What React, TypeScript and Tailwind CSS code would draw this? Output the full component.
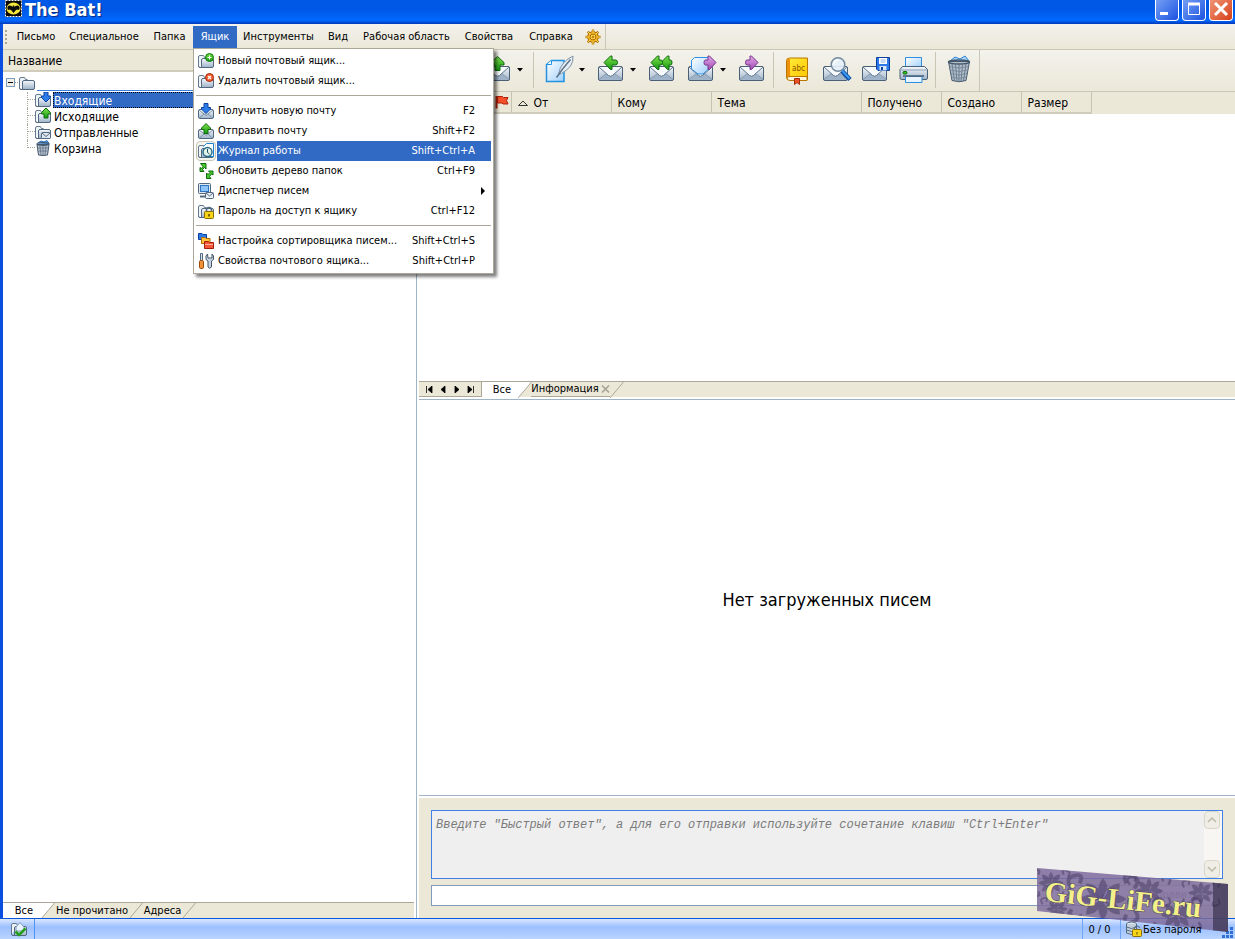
import { useState } from 'react'
import type { ReactNode } from 'react'

type Arrow = 'down' | 'up' | 'left' | 'left2' | 'right' | 'forward'

interface MenuEntry {
  label: string
  shortcut?: string
  icon: ReactNode
  submenu?: boolean
  separated?: boolean
}

/* ---------- shared gradients ---------- */

function Gradients() {
  return (
    <svg width="0" height="0" className="absolute" aria-hidden="true">
      <defs>
        <linearGradient id="steel" x1="0" y1="0" x2="0" y2="1">
          <stop offset="0" stopColor="#f6f9fc" />
          <stop offset="1" stopColor="#9db2c8" />
        </linearGradient>
        <linearGradient id="green" x1="0" y1="0" x2="0" y2="1">
          <stop offset="0" stopColor="#7be04a" />
          <stop offset="1" stopColor="#189a12" />
        </linearGradient>
        <linearGradient id="purple" x1="0" y1="0" x2="0" y2="1">
          <stop offset="0" stopColor="#e3a6ea" />
          <stop offset="1" stopColor="#a04fb4" />
        </linearGradient>
        <linearGradient id="paper" x1="0" y1="0" x2="1" y2="1">
          <stop offset="0" stopColor="#ffffff" />
          <stop offset="1" stopColor="#9fd0fb" />
        </linearGradient>
        <linearGradient id="gold" x1="0" y1="0" x2="1" y2="1">
          <stop offset="0" stopColor="#ffef3a" />
          <stop offset="1" stopColor="#ffc400" />
        </linearGradient>
      </defs>
    </svg>
  )
}

/* ---------- 16px icons ---------- */

function Icon16({ children }: { children: ReactNode }) {
  return (
    <svg width="16" height="16" viewBox="0 0 16 16" className="shrink-0" aria-hidden="true">
      {children}
    </svg>
  )
}

function FolderShape() {
  return (
    <>
      <path d="M.5 13V4q0-1.500 1.500-1.500h3.500l1 2h2" fill="#eef3f8" stroke="#64798e" />
      <path d="M3.500 14.500V7q0-1.500 1.500-1.500h9q1.500 0 1.500 1.500v6q0 1.500-1.500 1.500h-12q-1.500 0-1.500-1.500" fill="url(#steel)" stroke="#52687e" />
    </>
  )
}

function MailShape() {
  return (
    <>
      <rect x=".5" y="6.500" width="15" height="9" rx="1.500" fill="url(#steel)" stroke="#52687e" />
      <path d="M1 7l7 5.500L15 7M1.500 15l4.500-4M14.500 15L10 11" fill="none" stroke="#7d93a9" />
    </>
  )
}

const upPath = 'M8 .5l4.500 4.500v1.500h-2.500v4h-4v-4h-2.500v-1.500z'
const downPath = 'M6 .5h4v4h2.500v1.500L8 10.500 3.500 6v-1.500H6z'

const FolderIcon = () => <Icon16><FolderShape /></Icon16>
const InboxIcon = () => (
  <Icon16>
    <FolderShape />
    <path d={downPath} transform="translate(3 -.5)" fill="#2d7de8" stroke="#0b3fa0" />
  </Icon16>
)
const OutboxIcon = () => (
  <Icon16>
    <FolderShape />
    <path d={upPath} transform="translate(3 -.5)" fill="url(#green)" stroke="#0d6a10" />
  </Icon16>
)
const SentIcon = () => (
  <Icon16>
    <FolderShape />
    <rect x="6.500" y="8.500" width="9" height="6" rx="1" fill="#dfe8f1" stroke="#52687e" />
    <path d="M7 9l4 3.500L15 9" fill="none" stroke="#52687e" />
  </Icon16>
)
const TrashIcon = () => (
  <Icon16>
    <path d="M3 3l3-2 3 1 3-1.500 2 3z" fill="#5aa8f0" stroke="#2a6cb8" />
    <path d="M2 4.500l1.500 10.500q4.500 1 9 0L14 4.500z" fill="#b9c4d0" stroke="#45586b" />
    <path d="M5 6l1 9M8 6v9M11 6l-1 9M3 8h10M3.500 11h9" stroke="#5d7084" strokeWidth=".8" />
    <ellipse cx="8" cy="4" rx="6.500" ry="1.500" fill="none" stroke="#45586b" />
  </Icon16>
)
const FolderAddIcon = () => (
  <Icon16>
    <FolderShape />
    <circle cx="11.500" cy="4.500" r="4" fill="url(#green)" stroke="#0d7a10" />
    <path d="M9.500 4.500h4M11.500 2.500v4" stroke="#fff" />
  </Icon16>
)
const FolderRemoveIcon = () => (
  <Icon16>
    <FolderShape />
    <circle cx="11.500" cy="4.500" r="4" fill="#f2602f" stroke="#a82408" />
    <path d="M10 3l3 3M13 3l-3 3" stroke="#fff" strokeWidth="1.200" />
  </Icon16>
)
const ReceiveIcon = () => (
  <Icon16>
    <MailShape />
    <path d={downPath} fill="#2d7de8" stroke="#0b3fa0" />
  </Icon16>
)
const SendIcon = () => (
  <Icon16>
    <MailShape />
    <path d={upPath} fill="url(#green)" stroke="#0d6a10" />
  </Icon16>
)
const JournalIcon = () => (
  <Icon16>
    <FolderShape />
    <path d="M5.500 3.500l3-3h7v13h-7" fill="#fff" stroke="#1583d6" />
    <circle cx="9.500" cy="9" r="4.500" fill="#e4f3ea" stroke="#2b6c86" strokeWidth="1.500" />
    <path d="M9.500 6v3.500l2 1.500" fill="none" stroke="#1e4f62" />
  </Icon16>
)
const RefreshIcon = () => (
  <Icon16>
    <path d="M2.500.5h5.500v5.500L6.500 4.500l-2 2 1.500 2H2V4.500l1.500 1 1.500-2z" fill="#4cc832" stroke="#0d6a10" />
    <path d="M8.500 15.500V10l1.500 1.500 2-2L10.500 8H15v4l-1.500-1-2 2.500 1.500 2z" fill="#4cc832" stroke="#0d6a10" />
  </Icon16>
)
const DispatcherIcon = () => (
  <Icon16>
    <rect x=".5" y=".5" width="12" height="10" rx="1" fill="#dfe7ef" stroke="#52687e" />
    <rect x="2.500" y="2.500" width="8" height="6" fill="#8cc4fa" stroke="#2f74c0" />
    <path d="M2 13.500h5" stroke="#52687e" strokeWidth="2" />
    <rect x="7.500" y="9.500" width="8" height="6" rx="1" fill="#e9eff5" stroke="#52687e" />
    <path d="M8 10l3.500 3L15 10" fill="none" stroke="#52687e" />
  </Icon16>
)
const PasswordIcon = () => (
  <Icon16>
    <FolderShape />
    <path d="M8.500 9V7q0-2.500 2.500-2.500T13.500 7v2" fill="none" stroke="#52687e" strokeWidth="1.500" />
    <rect x="6.500" y="8.500" width="9" height="7" rx="1" fill="#f7d417" stroke="#8d6d00" />
    <path d="M11 11v2.500" stroke="#5a4500" strokeWidth="1.500" />
  </Icon16>
)
const SorterIcon = () => (
  <Icon16>
    <path d="M.5 6.500v-6h3.500l1 1h3.500v5z" fill="#2c7be5" stroke="#0d3f9c" />
    <path d="M3.500 10.500v-6h3.500l1 1h4v5z" fill="#ffc43a" stroke="#b56b00" />
    <path d="M6.500 15.500v-7h4l1 1h4v6z" fill="#f2573a" stroke="#a31f0b" />
    <path d="M7 11.500h8" stroke="#ffb09c" />
  </Icon16>
)
const PropertiesIcon = () => (
  <Icon16>
    <path d="M2.500.5h2v7h-2z" fill="#dbe4ec" stroke="#52687e" />
    <rect x="1.500" y="7.500" width="4" height="8" rx="1.200" fill="#f09238" stroke="#9c4c08" />
    <path d="M9.500 1L8 3v3.500l2 1.500v6q1.500 2.500 3.500 0V8l2-1.500V3L14 1v4h-4z" fill="#c6d4e2" stroke="#45586b" />
  </Icon16>
)

/* ---------- 32px toolbar icons ---------- */

function Icon32({ children }: { children: ReactNode }) {
  return (
    <svg width="32" height="32" viewBox="0 0 32 32" className="shrink-0" aria-hidden="true">
      {children}
    </svg>
  )
}

function BigMail() {
  return (
    <>
      <rect x="3.500" y="12.500" width="24" height="14" rx="1.500" fill="url(#steel)" stroke="#4a6076" />
      <path d="M5 25.500l7.500-6.500h6l7.500 6.500z" fill="#9fb3c8" />
      <path d="M4 25.500l8-6.500M27 25.500L19 19" stroke="#8398ad" fill="none" />
      <path d="M4 13h23l-9.500 8.500q-2 1.500-4 0z" fill="#f7fafc" />
      <path d="M4 13l9.500 8.500q2 1.500 4 0L27 13" fill="none" stroke="#5d738a" />
    </>
  )
}

function MailIcon({ arrow }: { arrow: Arrow }) {
  return (
    <Icon32>
      <BigMail />
      {arrow === 'down' && <path d="M13 1.500h5v7h4l-6.500 7.500L9 8.500h4z" fill="#2d7de8" stroke="#0b3fa0" />}
      {arrow === 'up' && <path d="M15.500 2.500l6.500 6v2.500h-4v5.500h-5V11H9V8.500z" fill="url(#green)" stroke="#0d6a10" />}
      {arrow === 'left' && <path d="M9 8.500l6.500-6.500h1.500v4h3.500q2 0 2 2.500t-2 2.500H17v4.500h-1.500z" fill="url(#green)" stroke="#0d6a10" />}
      {arrow === 'left2' && (
        <>
          <path d="M15 8.500l6.500-6.500H23v4h1.500q1.500 0 1.500 2.500t-1.500 2.500H23v4.500h-1.500z" fill="url(#green)" stroke="#0d6a10" />
          <path d="M5 8.500l6.500-6.500H13v4h2q1.500 0 1.500 2.500T15 11h-2v4.500h-1.500z" fill="url(#green)" stroke="#0d6a10" />
        </>
      )}
      {arrow === 'right' && <path d="M22 8.500L15.500 2H14v4h-3q-1.500 0-1.500 2.500T11 11h3v4.500h1.500z" fill="url(#purple)" stroke="#77358a" />}
      {arrow === 'forward' && (
        <>
          <path d="M6.500 6.500l3-3h14V15L18 20h-5l-6.500-5z" fill="url(#paper)" stroke="#2f8fe0" />
          <path d="M31 8.500L24.500 2H23v4h-2.500q-1.500 0-1.500 2.500t1.500 2.500H23v4.500h1.500z" fill="url(#purple)" stroke="#77358a" />
        </>
      )}
    </Icon32>
  )
}

const PenIcon = () => (
  <Icon32>
    <path d="M2.500 10.500l5-4h12.500v21h-17.500z" fill="url(#paper)" stroke="#2291e2" strokeWidth="1.500" />
    <path d="M3 10.500h4.500v-4" fill="#fff" stroke="#2291e2" />
    <path d="M14.500 20.500q1-7 5-11.500t9.500-7q.500 6-2.500 10t-9 7.500z" fill="#e6edf4" stroke="#7f92a6" />
    <path d="M12.500 23.500q6-9 14-18" fill="none" stroke="#5f7388" strokeWidth="1.500" />
  </Icon32>
)
const BookIcon = () => (
  <Icon32>
    <path d="M5.500 7q0-3 3-3h18v21.500h-18q-3 0-3-2z" fill="url(#gold)" stroke="#b87800" />
    <path d="M6 5h3v18H6z" fill="#f0900a" />
    <path d="M6 24q0-1.500 3-1.500h17v4H9q-3 0-3-2.500z" fill="#fdf6dc" stroke="#b87800" />
    <path d="M13.500 24.500h5v6l-2.500-2-2.500 2z" fill="#ef5326" stroke="#a32a0a" />
    <text x="11" y="17" fontSize="8" fill="#8a5200" fontFamily="DejaVu Sans Condensed, sans-serif">abc</text>
  </Icon32>
)
const SearchMailIcon = () => (
  <Icon32>
    <BigMail />
    <path d="M22 17l8 8.500" stroke="#0d4fa8" strokeWidth="4.500" />
    <path d="M22 16.500l7.500 8" stroke="#3c9bf2" strokeWidth="2" />
    <circle cx="18" cy="10.500" r="6.800" fill="#e3f0fb" fillOpacity=".9" stroke="#74899e" strokeWidth="1.500" />
    <path d="M14 10.500q0-4 4-4.500" stroke="#fff" strokeWidth="1.500" fill="none" />
  </Icon32>
)
const SaveMailIcon = () => (
  <Icon32>
    <BigMail />
    <path d="M17.500 3.500h13v13H19l-1.500-1.500z" fill="#2b78e6" stroke="#0b3f9e" />
    <rect x="20" y="4" width="8" height="6" fill="#fff" />
    <path d="M21.500 6h5M21.500 8h5" stroke="#8ab2e6" />
    <rect x="20.500" y="12" width="7" height="4.500" fill="#d6e5f7" />
    <rect x="22" y="13" width="2" height="3" fill="#0b3f9e" />
  </Icon32>
)
const PrinterIcon = () => (
  <Icon32>
    <path d="M7.500 3.500h16v10h-16z" fill="url(#paper)" stroke="#2f8fe0" />
    <path d="M4.500 12.500h22l3 3v8.500q0 1.500-1.500 1.500H3.500q-1.500 0-1.500-1.500V15.500z" fill="url(#steel)" stroke="#4a6076" />
    <path d="M3 16h26" stroke="#8da1b6" />
    <rect x="5" y="17.500" width="4" height="2.500" rx="1" fill="#35c51d" stroke="#0d6a10" />
    <path d="M7.500 22.500h16.500v6H7.500z" fill="#e8f4ff" stroke="#2f8fe0" />
    <path d="M5 22h21" stroke="#4a6076" strokeWidth="1.500" />
  </Icon32>
)
const BigTrashIcon = () => (
  <Icon32>
    <path d="M7 7l5-4 5 2 5-3 4 5z" fill="#a8d8ff" stroke="#2a7fd0" />
    <path d="M5.500 7.500L9 26.500q7 2.500 14 0l3.500-19z" fill="#b4bfca" stroke="#45586b" />
    <path d="M9 10l2.500 17M12.500 10.500l1.500 17M16 10.500v17M19.500 10.500l-1.500 17M23 10l-2.500 17" stroke="#66798c" />
    <path d="M6.500 12.500q9.500 3 19 0M7 16q9 3 18 0M8 19.500q8 3 16 0M8.500 23q7.500 3 15 0" stroke="#7a8c9e" fill="none" />
    <ellipse cx="16" cy="8" rx="10.500" ry="2" fill="none" stroke="#45586b" strokeWidth="1.500" />
  </Icon32>
)

const GearIcon = () => (
  <svg width="16" height="16" viewBox="0 0 16 16" aria-hidden="true">
    <path
      d="M8 .5v15M.5 8h15M2.700 2.700l10.600 10.600M13.300 2.700L2.700 13.300"
      stroke="#b87800"
      strokeWidth="2.500"
    />
    <circle cx="8" cy="8" r="5.300" fill="#f5b21a" stroke="#a86a00" />
    <path d="M8 1v14M1 8h14M3 3l10 10M13 3L3 13" stroke="#ffd95a" />
    <circle cx="8" cy="8" r="3" fill="none" stroke="#a86a00" />
    <circle cx="8" cy="8" r="1" fill="#a86a00" />
  </svg>
)

const BatIcon = () => (
  <svg width="17" height="17" viewBox="0 0 17 17" aria-hidden="true">
    <rect width="17" height="17" fill="#0a0a0a" />
    <rect x=".5" y=".5" width="16" height="16" fill="none" stroke="#fff" strokeDasharray="2 1" />
    <ellipse cx="8.500" cy="8.500" rx="7" ry="6" fill="#f5e63a" />
    <path d="M3 6q1.500-1 3.500 0l1 1 .5-2 .5 1 .5-1 .5 2 1-1q2-1 3.500 0 1.500 2 0 4l-2-.5-1.500 1-2 2.500-2-2.500-1.500-1-2 .5q-1.500-2 0-4z" fill="#0a0a0a" />
  </svg>
)

const FlagIcon = () => (
  <svg width="14" height="14" viewBox="0 0 14 14" aria-hidden="true">
    <path d="M2.500 1.500h5l1 1h4.500l-1.500 3 1.500 3.500h-5l-1-1h-4.500z" fill="#f4512a" stroke="#b01f06" />
    <path d="M1.500 1v12.500" stroke="#b01f06" strokeWidth="2" />
  </svg>
)

/* ---------- window parts ---------- */

function TitleBar() {
  const button = 'flex h-6 w-6 items-end justify-center rounded-b border-x border-b border-white pb-0.5'
  return (
    <header className="flex h-6 shrink-0 items-start justify-between bg-linear-to-b from-[#0058e6] from-40% via-[#0068ff] via-85% to-[#0038b8] pr-0.5 pl-[5px]">
      <div className="flex items-start gap-[3px]">
        <BatIcon />
        <h1 className="text-[18px] leading-5 font-bold text-white [text-shadow:1px_1px_1px_#0a2a80]">The Bat!</h1>
      </div>
      <div className="flex h-[21px] items-end gap-[3px]">
        <button type="button" aria-label="Свернуть" className={`${button} bg-linear-to-br from-[#7ba2f5] to-[#1c50e0]`}>
          <svg width="16" height="16" viewBox="0 0 16 16"><path d="M1 11.500h8" stroke="#fff" strokeWidth="3" /></svg>
        </button>
        <button type="button" aria-label="Развернуть" className={`${button} bg-linear-to-br from-[#7ba2f5] to-[#1c50e0]`}>
          <svg width="16" height="16" viewBox="0 0 16 16"><path d="M2.500 2v10.500h11V2z" stroke="#fff" fill="none" /><path d="M2 2h12" stroke="#fff" strokeWidth="3" /></svg>
        </button>
        <button type="button" aria-label="Закрыть" className={`${button} bg-linear-to-br from-[#f09878] to-[#d63c10]`}>
          <svg width="16" height="16" viewBox="0 0 16 16"><path d="M2 1l12 12M14 1L2 13" stroke="#fff" strokeWidth="3" /></svg>
        </button>
      </div>
    </header>
  )
}

const menuEntries: MenuEntry[] = [
  { label: 'Новый почтовый ящик...', icon: <FolderAddIcon /> },
  { label: 'Удалить почтовый ящик...', icon: <FolderRemoveIcon /> },
  { label: 'Получить новую почту', shortcut: 'F2', icon: <ReceiveIcon />, separated: true },
  { label: 'Отправить почту', shortcut: 'Shift+F2', icon: <SendIcon /> },
  { label: 'Журнал работы', shortcut: 'Shift+Ctrl+A', icon: <JournalIcon /> },
  { label: 'Обновить дерево папок', shortcut: 'Ctrl+F9', icon: <RefreshIcon /> },
  { label: 'Диспетчер писем', icon: <DispatcherIcon />, submenu: true },
  { label: 'Пароль на доступ к ящику', shortcut: 'Ctrl+F12', icon: <PasswordIcon /> },
  { label: 'Настройка сортировщика писем...', shortcut: 'Shift+Ctrl+S', icon: <SorterIcon />, separated: true },
  { label: 'Свойства почтового ящика...', shortcut: 'Shift+Ctrl+P', icon: <PropertiesIcon /> },
]

function MailboxMenu() {
  const [active, setActive] = useState('Журнал работы')

  return (
    <div
      role="menu"
      className="absolute top-full left-0 z-20 w-[301px] border border-[#aca899] bg-white p-0.5 text-black shadow-[3px_3px_3px_#00000080]"
    >
      {menuEntries.map((entry) => {
        const isActive = entry.label === active
        return (
          <div key={entry.label}>
            {entry.separated && <div className="mb-[5px] h-[5px] border-b border-[#aca899]" />}
            <button
              type="button"
              role="menuitem"
              onMouseEnter={() => setActive(entry.label)}
              className="flex h-5 w-full items-stretch text-left"
            >
              <span
                className={`flex w-5 items-center justify-center ${isActive ? 'rounded-sm border border-[#c9c6b8] bg-[#f4f3ec]' : ''}`}
              >
                {entry.icon}
              </span>
              <span
                className={`ml-px flex flex-1 items-center pt-px pl-px whitespace-nowrap ${isActive ? 'bg-[#316ac5] text-white' : ''} ${entry.submenu ? 'pr-[5px]' : 'pr-4'}`}
              >
                <span className="flex-1">{entry.label}</span>
                {entry.shortcut}
                {entry.submenu && (
                  <svg width="6" height="8" viewBox="0 0 6 8"><path d="M1 0l4 4-4 4z" /></svg>
                )}
              </span>
            </button>
          </div>
        )
      })}
    </div>
  )
}

const menuItems = [
  { label: 'Письмо', width: 'w-[52px]' },
  { label: 'Специальное', width: 'w-[84px]' },
  { label: 'Папка', width: 'w-[47px]' },
  { label: 'Ящик', width: 'w-11' },
  { label: 'Инструменты', width: 'w-[83px]' },
  { label: 'Вид', width: 'w-9' },
  { label: 'Рабочая область', width: 'w-[101px]' },
  { label: 'Свойства', width: 'w-16' },
  { label: 'Справка', width: 'w-[60px]' },
]

function MenuBar() {
  return (
    <nav className="flex h-[26px] shrink-0 border-b border-[#cbc7b8] bg-linear-to-b from-[#f3f2ec] to-[#ebe8d8]">
      <div className="flex items-center border-r border-[#cbc7b8] pr-1 text-[11px] leading-4">
        <svg width="7" height="18" viewBox="0 0 7 18" aria-hidden="true"><path d="M3 2v15" stroke="#a9a698" strokeWidth="2" strokeDasharray="2 2" /></svg>
        {menuItems.map((item) => (
          <div key={item.label} className="relative">
            <button
              type="button"
              className={`flex h-[22px] items-center justify-center pt-px whitespace-nowrap ${item.width} ${item.label === 'Ящик' ? 'bg-[#316ac5] text-white' : ''}`}
            >
              {item.label}
            </button>
            {item.label === 'Ящик' && <MailboxMenu />}
          </div>
        ))}
        <button type="button" aria-label="Настройка" className="ml-1"><GearIcon /></button>
      </div>
    </nav>
  )
}

const folders = [
  { name: 'Входящие', icon: <InboxIcon /> },
  { name: 'Исходящие', icon: <OutboxIcon /> },
  { name: 'Отправленные', icon: <SentIcon /> },
  { name: 'Корзина', icon: <TrashIcon /> },
]

function Slant({ filled }: { filled?: boolean }) {
  return (
    <svg width="14" height="16" viewBox="0 0 14 16" className="shrink-0" aria-hidden="true">
      {filled && <path d="M0 0h13.500L0 16z" fill="#fff" />}
      <path d="M0 16L13.500 0" stroke="#aca899" />
    </svg>
  )
}

function FolderPanel() {
  const [selected, setSelected] = useState('Входящие')

  return (
    <aside className="flex w-[414px] shrink-0 flex-col border-r border-[#9fb4c4] bg-white">
      <div className="flex h-[22px] shrink-0 items-center border-b-2 border-[#d0ccbc] bg-[#ebe8d8] px-[5px] pt-0.5 text-[12px]">Название</div>
      <div className="flex-1 pt-0.5 pr-0.5 text-[12px] leading-4">
        <div className="flex h-[17px] items-center">
          <button type="button" aria-label="Свернуть папку" className="ml-[3px] flex h-[9px] w-[9px] items-center justify-center border border-[#7b9ebd] bg-[#f1efe6]">
            <span className="h-px w-[5px] bg-black" />
          </button>
          <span className="mr-px w-[3px] border-t border-dotted border-[#aca899]" />
          <FolderIcon />
          <span className="ml-0.5 h-full flex-1 border-b border-[#3f7fe0]" />
        </div>
        <ul className="ml-6 pt-px">
          {folders.map((folder, i) => (
            <li key={folder.name} className="flex h-4">
              <span className={`w-2 border-l border-dotted border-[#aca899] ${i === folders.length - 1 ? 'h-2' : 'h-4'}`}>
                <span className="block h-2 border-b border-dotted border-[#aca899]" />
              </span>
              <button type="button" onClick={() => setSelected(folder.name)} className="flex h-4 flex-1 items-center gap-0.5 text-left">
                {folder.icon}
                <span
                  className={`h-4 flex-1 border border-dotted leading-4 ${selected === folder.name ? 'border-black bg-[#316ac5] text-white' : 'border-transparent'}`}
                >
                  {folder.name}
                </span>
              </button>
            </li>
          ))}
        </ul>
      </div>
      <div className="mr-0.5 flex h-4 shrink-0 items-center border-t border-[#aca899] bg-[#ebe8d8] text-[11px] leading-4">
        <button type="button" className="h-full w-[38px] bg-white pl-1 text-center">Все</button>
        <Slant filled />
        <button type="button" className="w-[74px] whitespace-nowrap">Не прочитано</button>
        <Slant />
        <button type="button" className="w-[39px] whitespace-nowrap">Адреса</button>
        <Slant />
      </div>
    </aside>
  )
}

function ToolButton({ label, children, menu }: { label: string; children: ReactNode; menu?: boolean }) {
  return (
    <div className="flex items-center">
      <button type="button" aria-label={label}>{children}</button>
      {menu && (
        <button type="button" aria-label={`${label}: меню`} className="flex w-3 justify-center">
          <svg width="6" height="4" viewBox="0 0 6 4"><path d="M0 0h6L3 3.500z" /></svg>
        </button>
      )}
    </div>
  )
}

const Divider = ({ className }: { className: string }) => <span className={`h-9 w-px bg-[#c9c5b2] ${className}`} />

function Toolbar() {
  return (
    <div className="flex h-[42px] shrink-0 border-b border-[#cbc7b8] bg-linear-to-b from-[#f3f2ec] to-[#ebe8d8]">
      <div className="flex items-center gap-[7px] border-r border-[#cbc7b8] pr-1 pb-0.5 pl-px">
        <ToolButton label="Получить почту" menu><MailIcon arrow="down" /></ToolButton>
        <span className="pl-1" />
        <ToolButton label="Отправить почту" menu><MailIcon arrow="up" /></ToolButton>
        <Divider className="mr-[3px]" />
        <ToolButton label="Создать письмо" menu><PenIcon /></ToolButton>
        <ToolButton label="Ответить" menu><MailIcon arrow="left" /></ToolButton>
        <ToolButton label="Ответить всем"><MailIcon arrow="left2" /></ToolButton>
        <ToolButton label="Переслать" menu><MailIcon arrow="forward" /></ToolButton>
        <ToolButton label="Перенаправить"><MailIcon arrow="right" /></ToolButton>
        <Divider className="-ml-0.5" />
        <ToolButton label="Адресная книга"><BookIcon /></ToolButton>
        <ToolButton label="Поиск"><SearchMailIcon /></ToolButton>
        <ToolButton label="Сохранить"><SaveMailIcon /></ToolButton>
        <ToolButton label="Печать"><PrinterIcon /></ToolButton>
        <Divider className="-ml-0.5" />
        <ToolButton label="Удалить"><BigTrashIcon /></ToolButton>
      </div>
    </div>
  )
}

const columns = [
  { label: 'От', width: 'w-[100px]', sorted: true },
  { label: 'Кому', width: 'w-[100px]' },
  { label: 'Тема', width: 'w-[150px]' },
  { label: 'Получено', width: 'w-20' },
  { label: 'Создано', width: 'w-20' },
  { label: 'Размер', width: 'w-[70px]' },
]

function MessageList() {
  return (
    <div className="h-[289px] shrink-0">
      <div className="bg-[#ebe8d8]">
        <table className="table-fixed border-collapse text-[12px] leading-4">
          <thead>
            <tr className="h-[21px] border-b-2 border-[#d0ccbc]">
              <th className="w-[92px] border-r border-[#c6c2b2] p-0" aria-label="Флаг">
                <span className="flex justify-end pr-0.5"><FlagIcon /></span>
              </th>
              {columns.map((column) => (
                <th key={column.label} className={`border-r border-[#c6c2b2] p-0 pt-0.5 pl-1.5 text-left font-normal ${column.width}`}>
                  <span className="flex items-center gap-1.5">
                    {column.sorted && (
                      <svg width="10" height="6" viewBox="0 0 10 6"><path d="M.5 5.500h9L5 1z" fill="none" stroke="#333" /></svg>
                    )}
                    {column.label}
                  </span>
                </th>
              ))}
            </tr>
          </thead>
        </table>
      </div>
    </div>
  )
}

const pagerPaths = [
  { label: 'Первая', d: 'M1.500 0v7M7 0v7L3 3.500z' },
  { label: 'Назад', d: 'M6 0v7L2 3.500z' },
  { label: 'Вперёд', d: 'M2 0v7l4-3.500z' },
  { label: 'Последняя', d: 'M6.500 0v7M1 0v7l4-3.500z' },
]

function ViewTabs() {
  return (
    <div className="flex h-4 shrink-0 items-center border-t border-[#aca899] bg-[#ebe8d8] text-[11px] leading-4">
      <div className="flex h-full w-[63px] items-center gap-1.5 border-r border-b border-[#aca899] pl-1.5">
        {pagerPaths.map((item) => (
          <button key={item.label} type="button" aria-label={item.label}>
            <svg width="8" height="7" viewBox="0 0 8 7"><path d={item.d} fill="#000" stroke="#000" strokeWidth=".8" /></svg>
          </button>
        ))}
      </div>
      <button type="button" className="h-full w-9 bg-white pl-1 text-center">Все</button>
      <Slant filled />
      <div className="-ml-px flex h-full items-center border-b border-[#aca899]">
        <button type="button" className="w-[68px] whitespace-nowrap">Информация</button>
        <button type="button" aria-label="Закрыть вкладку" className="ml-0.5">
          <svg width="9" height="8" viewBox="0 0 9 8"><path d="M1 .5l7 7M8 .5l-7 7" stroke="#a5a294" strokeWidth="1.500" /></svg>
        </button>
      </div>
      <Slant />
    </div>
  )
}

function ScrollStrip() {
  const button = 'flex h-[18px] w-4 items-center justify-center rounded-sm border border-[#d8d6c8] bg-[#efeee6]'
  return (
    <div className="flex w-[18px] flex-col items-start justify-between bg-[#f7f6f2]">
      <button type="button" aria-label="Вверх" className={button}>
        <svg width="10" height="6" viewBox="0 0 10 6"><path d="M1 5l4-4 4 4" fill="none" stroke="#bcb9a8" strokeWidth="1.500" /></svg>
      </button>
      <button type="button" aria-label="Вниз" className={button}>
        <svg width="10" height="6" viewBox="0 0 10 6"><path d="M1 1l4 4 4-4" fill="none" stroke="#bcb9a8" strokeWidth="1.500" /></svg>
      </button>
    </div>
  )
}

function QuickReply() {
  return (
    <form className="flex h-[120px] shrink-0 flex-col gap-1.5 bg-[#ebe8d8] px-3 pt-3" onSubmit={(e) => e.preventDefault()}>
      <div className="flex h-[69px] border border-[#3f7fe8] bg-[#efefef]">
        <textarea
          aria-label="Быстрый ответ"
          placeholder={'Введите "Быстрый ответ", а для его отправки используйте сочетание клавиш "Ctrl+Enter"'}
          className="h-full flex-1 resize-none overflow-hidden bg-transparent px-1 pt-1.5 font-['Liberation_Mono',monospace] text-[12px] leading-4 text-[#7b7b7b] italic outline-none placeholder:text-[#7b7b7b]"
        />
        <ScrollStrip />
      </div>
      <div className="flex h-[21px] gap-2 text-[11px]">
        <div className="relative flex-1">
          <select aria-label="Шаблон" className="h-full w-full appearance-none border border-[#7f9db9] bg-white px-1">
            <option></option>
          </select>
          <span className="pointer-events-none absolute top-0.5 right-0.5 flex h-[17px] w-4 items-center justify-center rounded-sm bg-[#c1d3fb]">
            <svg width="10" height="6" viewBox="0 0 10 6"><path d="M1 1l4 4 4-4" fill="none" stroke="#4d6185" strokeWidth="2" /></svg>
          </span>
        </div>
        <button type="submit" disabled className="w-[105px] rounded-sm border border-[#c9c7ba] bg-[#f5f4ea] text-[#a1a192]">Отправить</button>
      </div>
    </form>
  )
}

function StatusBar() {
  return (
    <footer className="flex h-[21px] shrink-0 items-stretch border-t border-[#0a56d6] bg-linear-to-b from-[#dbe8ff] via-[#9cc0ff] via-40% to-[#b9d4ff] text-[11px] leading-5">
      <div className="flex w-[35px] items-center border-r border-[#4f94f5] pl-[11px]">
        <Icon16>
          <FolderShape />
          <path d="M5 6l4-4.500L13 6v4H5z" fill="#eaf4ff" stroke="#7f9bb5" />
          <path d="M4.500 10.500l3.500 3.500 6.500-6.500" fill="none" stroke="#22a01c" strokeWidth="2.500" />
        </Icon16>
      </div>
      <div className="flex-1" />
      <div className="w-[39px] border-x border-[#6ea6f7] pt-px pr-1 text-center">0 / 0</div>
      <div className="flex w-[114px] items-center gap-px pl-[5px] whitespace-nowrap">
        <Icon16>
          <ellipse cx="5.500" cy="3" rx="5" ry="2" fill="#dfe7ef" stroke="#52687e" />
          <path d="M.5 3v9q5 3 10 0V3M.5 6q5 3 10 0M.5 9q5 3 10 0" fill="#c2d0de" stroke="#52687e" />
          <path d="M8.500 9V7q0-2 2.500-2t2.500 2" fill="none" stroke="#52687e" />
          <rect x="6.500" y="8.500" width="9" height="7" rx="1" fill="#f7d417" stroke="#8d6d00" />
          <path d="M11 11v2.500" stroke="#5a4500" />
        </Icon16>
        <span className="relative z-20 flex-1 pt-px">Без пароля</span>
        <svg width="12" height="12" viewBox="0 0 12 12" className="mr-px self-end" aria-hidden="true">
          <path d="M8 0h3v3H8zM4 4h3v3H4zM8 4h3v3H8zM0 8h3v3H0zM4 8h3v3H4zM8 8h3v3H8z" fill="#2f6fd8" />
        </svg>
      </div>
    </footer>
  )
}

function Flourish({ x, y, scale }: { x: number; y: number; scale: number }) {
  return (
    <g transform={`translate(${x} ${y}) scale(${scale})`} fill="#4d4068" opacity=".55">
      <path d="M0-16q7 8 0 16-7-8 0-16zM0 16q7-8 0-16-7 8 0 16zM-18 0q8-7 18 0-10 7-18 0zM18 0q-8-7-18 0 10 7 18 0zM-13-12q10 0 13 12-13-1-13-12zM13-12q-10 0-13 12 13-1 13-12zM-13 12q10 0 13-12-13 1-13 12zM13 12q-10 0-13-12 13 1 13 12z" />
      <path d="M-24-8q-6-8 2-10t4 6M24-8q6-8-2-10t-4 6M-24 8q-6 8 2 10t4-6M24 8q6 8-2 10t-4-6" fill="none" stroke="#4d4068" strokeWidth="3" />
    </g>
  )
}

function Watermark() {
  return (
    <svg width="192" height="66" viewBox="0 0 192 66" className="pointer-events-none absolute right-[6px] bottom-[6px] z-10" aria-label="GiG-LiFe.ru">
      <clipPath id="banner"><path d="M0 1l191 16v48L0 44z" /></clipPath>
      <g clipPath="url(#banner)">
        <rect width="192" height="66" fill="#7d6b9c" fillOpacity=".85" />
        <Flourish x={14} y={16} scale={0.7} />
        <Flourish x={66} y={32} scale={1.300} />
        <Flourish x={112} y={24} scale={0.8} />
        <Flourish x={140} y={48} scale={0.9} />
        <Flourish x={164} y={26} scale={0.7} />
        <Flourish x={20} y={42} scale={0.6} />
        <path d="M176 0h16v66h-16z" fill="#2c2740" opacity=".6" />
      </g>
      <text
        x="7"
        y="34"
        transform="rotate(6 7 34)"
        fontSize="29"
        fontWeight="bold"
        fontFamily="Liberation Serif, serif"
        fill="#f4f08a"
        stroke="#4d4660"
        strokeWidth="1"
        paintOrder="stroke"
      >
        GiG-LiFe.ru
      </text>
    </svg>
  )
}

export default function App() {
  return (
    <div className="relative flex h-screen min-h-[600px] flex-col overflow-hidden bg-[#ebe8d8] font-['DejaVu_Sans_Condensed','DejaVu_Sans',sans-serif] text-black">
      <Gradients />
      <TitleBar />
      <div className="flex min-h-0 flex-1 flex-col border-l-[3px] border-[#0a4fe0]">
        <MenuBar />
        <div className="flex min-h-0 flex-1">
          <FolderPanel />
          <main className="flex min-w-0 flex-1 flex-col bg-white pl-0.5">
            <Toolbar />
            <MessageList />
            <ViewTabs />
            <section className="mt-0.5 mb-0.5 flex flex-1 items-center justify-center border-y border-[#9fb4c4] pt-1 text-[18px]">
              Нет загруженных писем
            </section>
            <QuickReply />
          </main>
        </div>
      </div>
      <StatusBar />
      <Watermark />
    </div>
  )
}
